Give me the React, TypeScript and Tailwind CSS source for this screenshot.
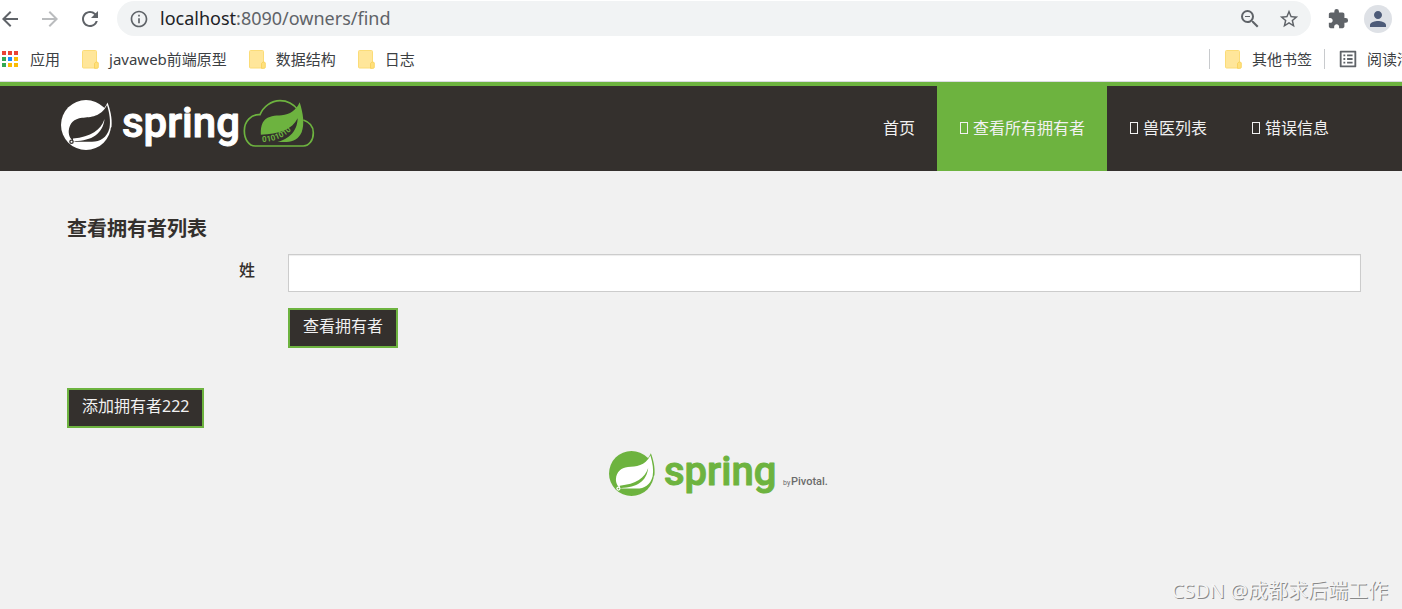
import type { ReactNode } from 'react';
import {
  MdArrowBack,
  MdArrowForward,
  MdExtension,
  MdInfoOutline,
  MdListAlt,
  MdPerson,
  MdRefresh,
  MdStarBorder,
  MdZoomOut,
} from 'react-icons/md';

const BOOKMARKS = ['javaweb前端原型', '数据结构', '日志'];

const APP_DOTS = [
  '#ea4335', '#ea4335', '#ea4335',
  '#34a853', '#1a8cff', '#fbbc04',
  '#34a853', '#fbbc04', '#fbbc04',
];

const NAV = [
  { label: '首页', icon: false, active: false },
  { label: '查看所有拥有者', icon: true, active: true },
  { label: '兽医列表', icon: true, active: false },
  { label: '错误信息', icon: true, active: false },
];

function AppsIcon() {
  return (
    <svg viewBox="0 0 17 17" className="size-[17px]">
      {APP_DOTS.map((color, i) => (
        <rect key={i} x={(i % 3) * 6} y={Math.floor(i / 3) * 6} width="4" height="4" fill={color} />
      ))}
    </svg>
  );
}

function FolderIcon() {
  return (
    <svg viewBox="0 0 17 19" className="h-[19px] w-[17px]">
      <path d="M1.5 .5h12a1 1 0 0 1 1 1v16.5h-13a1 1 0 0 1-1-1v-15.500a1 1 0 0 1 1-1z" fill="#ffe69a" stroke="#fbdc78" />
      <path d="M12.500 18.300v-5l1.500-1.300h1.500l.8 1v4.300a1 1 0 0 1-1 1z" fill="#ffe07c" stroke="#f7cf55" strokeWidth=".8" />
    </svg>
  );
}

function Bookmark({ children }: { children: ReactNode }) {
  return (
    <a href="#" className="flex shrink-0 items-center gap-[10px] whitespace-nowrap">
      <FolderIcon />
      {children}
    </a>
  );
}

const TOOL = 'flex w-10 shrink-0 justify-center';

function Browser() {
  return (
    <div className="overflow-hidden border-b border-[#dadce0] bg-white text-[#5f6368]">
      <div className="flex h-[37px] items-center pr-[10px]">
        <div className="-ml-[10px] flex pr-[7px]">
          <button aria-label="后退" className={TOOL}><MdArrowBack className="size-6" /></button>
          <button aria-label="前进" className={`${TOOL} text-[#babcbe]`}><MdArrowForward className="size-6" /></button>
          <button aria-label="刷新" className={TOOL}><MdRefresh className="size-6" /></button>
        </div>
        <div className="flex h-[35px] flex-1 items-center rounded-full bg-[#f1f3f4] pr-[11px] pl-3">
          <MdInfoOutline className="size-5 shrink-0" />
          <label className="flex flex-1 pl-[11px] text-[18px]">
            <span className="text-[#202124]">localhost</span>
            <input defaultValue=":8090/owners/find" aria-label="地址" className="flex-1 bg-transparent outline-none" />
          </label>
          <button aria-label="缩放"><MdZoomOut className="size-6" /></button>
          <button aria-label="收藏" className="ml-4"><MdStarBorder className="size-[22px]" /></button>
        </div>
        <button aria-label="扩展程序" className="ml-4"><MdExtension className="size-[22px]" /></button>
        <button aria-label="用户" className="ml-[15px] flex size-7 items-center justify-center rounded-full bg-[#dee1e6] text-[#4d5b78]">
          <MdPerson className="size-6" />
        </button>
      </div>
      <div className="flex h-11 items-center text-[15px] text-[#3c4043]">
        <a href="#" className="mr-[22px] flex shrink-0 items-center gap-[11px] pl-[2px]">
          <AppsIcon />
          应用
        </a>
        <div className="flex flex-1 gap-[22px]">
          {BOOKMARKS.map(name => <Bookmark key={name}>{name}</Bookmark>)}
        </div>
        <div className="flex w-[193px] shrink-0 items-center">
          <span className="mr-[15px] h-5 w-px shrink-0 bg-[#c8cacd]" />
          <Bookmark>其他书签</Bookmark>
          <span className="mx-3 h-5 w-px shrink-0 bg-[#c8cacd]" />
          <a href="#" className="flex shrink-0 items-center gap-2">
            <MdListAlt className="size-[22px] text-[#5f6368]" />
            阅读清单
          </a>
        </div>
      </div>
    </div>
  );
}

function SpringMark({ disc, leaf }: { disc: string; leaf: string }) {
  return (
    <g>
      <circle cx="25" cy="25" r="25" fill={disc} />
      <path d="M39 12C43 9 45 6 46.500 2.500C49 9 51.500 18 50.500 27L46 32z" fill={disc} />
      <path d="M46 5C48.500 13 49.800 21 48.500 28C46 38 39 41.500 31 41.800H15C10 41 7.500 36 7.700 31C8.500 23 13 19 21 17.800C30 17 40 17 46 5z" fill={leaf} />
      <path d="M43.500 19C40 30 30 37 12 38.500V41C30 41.500 42 34 43.500 19z" fill={disc} />
      <circle cx="10.500" cy="41.800" r="2.300" fill={leaf} />
      <circle cx="10.500" cy="41.800" r="1" fill={disc} />
    </g>
  );
}

function CloudMark() {
  return (
    <g transform="translate(179 -6) scale(.3333)">
      <path
        d="M174 48C162 32 142 20 120 20C94 20 70 38 60 62C34 60 13 82 13 110C13 135 26 156 46 156H190C208 156 220 138 220 116C220 98 208 84 190 78"
        fill="none"
        stroke="#6db33f"
        strokeWidth="5"
      />
      <path d="M179 25C190 60 194 90 185 115C176 135 160 144 140 144H68C60 125 60 95 72 80C85 66 105 65 125 64C150 62 168 50 179 25z" fill="#6db33f" />
      <path d="M173 73C158 106 115 122 62 122V147H100C142 140 172 116 173 73z" fill="#34302d" />
      <path id="bits" d="M67 144C110 142 148 126 172 84" fill="none" />
      <text fontFamily="Roboto, sans-serif" fontSize="24" fontWeight="700" fill="#6db33f">
        <textPath href="#bits">0101010</textPath>
      </text>
    </g>
  );
}

function HeaderLogo() {
  return (
    <svg viewBox="0 -8 256 66" className="h-[66px] w-[256px]" role="img" aria-label="spring">
      <SpringMark disc="#fff" leaf="#34302d" />
      <text x="61" y="37" fontFamily="Roboto, sans-serif" fontSize="42" fontWeight="500" fill="#fff" stroke="#fff" strokeWidth="1" strokeLinejoin="round">spring</text>
      <CloudMark />
    </svg>
  );
}

function FooterLogo() {
  return (
    <svg viewBox="0 -8 222 60" className="h-[60px] w-[222px]" role="img" aria-label="spring by Pivotal">
      <g transform="scale(.9)"><SpringMark disc="#6db33f" leaf="#fff" /></g>
      <text x="55" y="34" fontFamily="Roboto, sans-serif" fontSize="40" fontWeight="500" fill="#6db33f" stroke="#6db33f" strokeLinejoin="round">spring</text>
      <text x="174" y="34" fontFamily="Roboto, sans-serif" fontSize="7" fill="#6b6b6b">by</text>
      <text x="182" y="34" fontFamily="Roboto, sans-serif" fontSize="11" fontWeight="500" fill="#6b6b6b">Pivotal.</text>
    </svg>
  );
}

function Header() {
  return (
    <header className="flex h-[89px] items-stretch justify-between border-t-4 border-[#6db33f] bg-[#34302d] pr-[51px] pl-[61px]">
      <a href="#" className="pt-[6px]"><HeaderLogo /></a>
      <nav className="flex text-[16px] text-[#f1f1f1]">
        {NAV.map(item => (
          <a key={item.label} href="#" className={`flex items-center gap-1 px-[22px] pb-0.5 ${item.active ? 'bg-[#6db33f]' : ''}`}>
            {item.icon && <span className="mx-px h-3 w-2 border border-current" />}
            {item.label}
          </a>
        ))}
      </nav>
    </header>
  );
}

const BUTTON = 'h-10 border-2 border-[#6db33f] bg-[#34302d] px-[13px] pb-1 text-[16px] text-[#f1f1f1]';

export default function App() {
  return (
    <div className="relative flex min-h-screen flex-col bg-[#f1f1f1] font-['Noto_Sans','Noto_Sans_CJK_SC',sans-serif] text-[#34302d]">
      <Browser />
      <Header />
      <main className="pt-11 pr-[41px] pl-[67px]">
        <h2 className="text-[20px] leading-7 font-bold">查看拥有者列表</h2>
        <form className="mt-[11px] grid grid-cols-[221px_1fr] gap-y-4" onSubmit={e => e.preventDefault()}>
          <label htmlFor="lastName" className="pt-1 pr-[33px] text-right text-[16px] font-medium">姓</label>
          <input
            id="lastName"
            className="h-[38px] border border-[#ccc] bg-white px-3 shadow-[inset_0_1px_1px_rgba(0,0,0,0.075)] outline-none"
          />
          <button type="submit" className={`${BUTTON} col-start-2 justify-self-start`}>查看拥有者</button>
        </form>
        <button className={`${BUTTON} mt-10`}>添加拥有者222</button>
      </main>
      <footer className="mt-[15px] flex justify-center pl-[38px]"><FooterLogo /></footer>
      <div className="absolute right-[14px] bottom-1 text-[20px] leading-7 text-[#f4f4f4] [text-shadow:1px_1px_0_#8a8a8a]">
        CSDN @成都求后端工作
      </div>
    </div>
  );
}
